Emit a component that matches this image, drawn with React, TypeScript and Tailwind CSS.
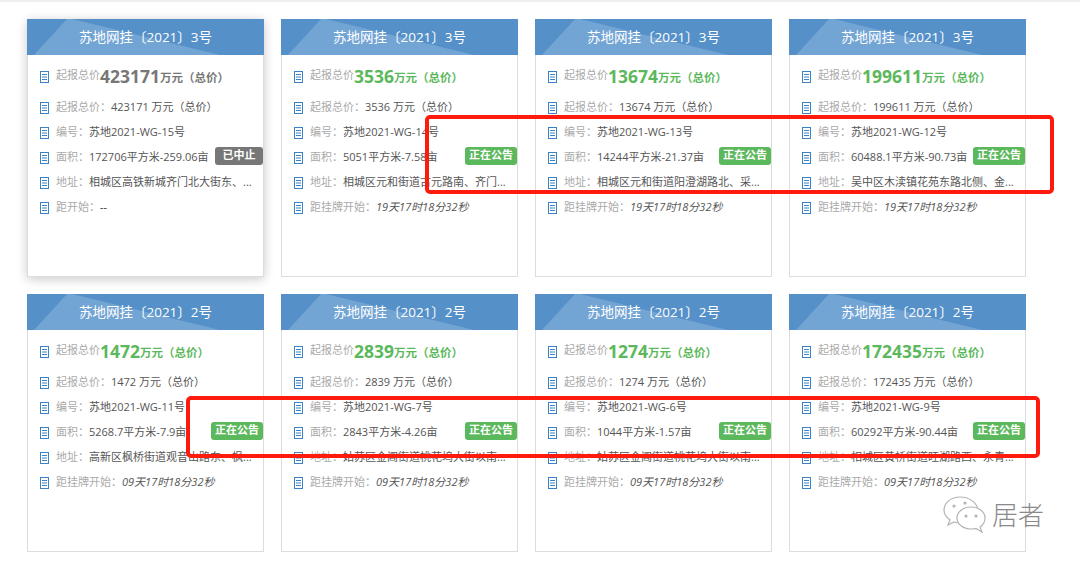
import type { ReactNode } from "react";

type Lot = {
  title: string;
  price: string;
  no: string;
  area: string;
  addr: string;
  timeLabel: string;
  time: string;
  badge: string;
  stopped?: boolean;
};

const lots: Lot[] = [
  { title: "苏地网挂〔2021〕3号", price: "423171", no: "苏地2021-WG-15号", area: "172706平方米-259.06亩", addr: "相城区高铁新城齐门北大街东、...", timeLabel: "距开始：", time: "--", badge: "已中止", stopped: true },
  { title: "苏地网挂〔2021〕3号", price: "3536", no: "苏地2021-WG-14号", area: "5051平方米-7.58亩", addr: "相城区元和街道古元路南、齐门...", timeLabel: "距挂牌开始：", time: "19天17时18分32秒", badge: "正在公告" },
  { title: "苏地网挂〔2021〕3号", price: "13674", no: "苏地2021-WG-13号", area: "14244平方米-21.37亩", addr: "相城区元和街道阳澄湖路北、采...", timeLabel: "距挂牌开始：", time: "19天17时18分32秒", badge: "正在公告" },
  { title: "苏地网挂〔2021〕3号", price: "199611", no: "苏地2021-WG-12号", area: "60488.1平方米-90.73亩", addr: "吴中区木渎镇花苑东路北侧、金...", timeLabel: "距挂牌开始：", time: "19天17时18分32秒", badge: "正在公告" },
  { title: "苏地网挂〔2021〕2号", price: "1472", no: "苏地2021-WG-11号", area: "5268.7平方米-7.9亩", addr: "高新区枫桥街道观音山路东、枫...", timeLabel: "距挂牌开始：", time: "09天17时18分32秒", badge: "正在公告" },
  { title: "苏地网挂〔2021〕2号", price: "2839", no: "苏地2021-WG-7号", area: "2843平方米-4.26亩", addr: "姑苏区金阊街道桃花坞大街以南...", timeLabel: "距挂牌开始：", time: "09天17时18分32秒", badge: "正在公告" },
  { title: "苏地网挂〔2021〕2号", price: "1274", no: "苏地2021-WG-6号", area: "1044平方米-1.57亩", addr: "姑苏区金阊街道桃花坞大街以南...", timeLabel: "距挂牌开始：", time: "09天17时18分32秒", badge: "正在公告" },
  { title: "苏地网挂〔2021〕2号", price: "172435", no: "苏地2021-WG-9号", area: "60292平方米-90.44亩", addr: "相城区黄桥街道旺湖路西、永青...", timeLabel: "距挂牌开始：", time: "09天17时18分32秒", badge: "正在公告" },
];

function DocIcon() {
  return (
    <svg width="9" height="12" viewBox="0 0 9 12" className="shrink-0 mt-px" fill="none" stroke="#3b82c4" strokeWidth="1">
      <rect x="0.5" y="0.5" width="8" height="11" />
      <path d="M2 3.5h5M2 6h5M2 8.5h5" />
    </svg>
  );
}

function Row({ label, children, badge }: { label: string; children: ReactNode; badge?: ReactNode }) {
  return (
    <div className="flex items-center h-[25px] text-[11px] text-[#555]">
      <DocIcon />
      <span className="ml-[7px] text-[#aaa] whitespace-nowrap">{label}</span>
      {children}
      {badge}
    </div>
  );
}

function Card({ lot }: { lot: Lot }) {
  const priceColor = lot.stopped ? "text-[#777]" : "text-[#5cb85c]";
  return (
    <div className={`h-full bg-white border border-[#ddd] ${lot.stopped ? "shadow-[0_2px_10px_rgba(0,0,0,0.22)]" : ""}`}>
      <div className="relative -mx-px -mt-px h-[36px] bg-[#5591c8] overflow-hidden flex items-center justify-center">
        <svg width="237" height="36" viewBox="0 0 237 36" className="absolute left-0 top-0">
          <polygon points="7,36 40,0 45,0 193,36" fill="#72a4d4" />
        </svg>
        <span className="relative text-[13.5px] text-white">{lot.title}</span>
      </div>
      <div className="pl-[12px] pt-[9px]">
        <div className="flex items-center h-[25px] text-[#aaa] text-[11px] whitespace-nowrap">
          <DocIcon />
          <span className="ml-[7px] -mt-[3px]">起报总价</span>
          <span className={`text-[17.5px] font-bold leading-none ${priceColor}`}>{lot.price}</span>
          <span className={`text-[11.5px] font-bold mt-[3px] ${priceColor}`}>万元（总价）</span>
        </div>
        <div className="mt-[6px]">
          <Row label="起报总价：">
            <span className="whitespace-nowrap">{lot.price} 万元（总价）</span>
          </Row>
          <Row label="编号：">
            <span className="whitespace-nowrap">{lot.no}</span>
          </Row>
          <Row
            label="面积："
            badge={
              <span className={`ml-auto mb-[4px] shrink-0 h-[18px] rounded-[3px] text-white text-[11px] font-bold flex items-center justify-center ${lot.stopped ? "w-[48px] bg-[#777]" : "w-[52px] bg-[#5cb85c]"}`}>
                {lot.badge}
              </span>
            }
          >
            <span className="whitespace-nowrap">{lot.area}</span>
          </Row>
          <Row label="地址：">
            <span className="whitespace-nowrap">{lot.addr}</span>
          </Row>
          <Row label={lot.timeLabel}>
            <span className="whitespace-nowrap italic">{lot.time}</span>
          </Row>
        </div>
      </div>
    </div>
  );
}

function WechatMark() {
  return (
    <svg width="44" height="40" viewBox="0 0 44 40" fill="#fff" stroke="#b4b4b4" strokeWidth="1.2">
      <path d="M17 2C8 2 1 8 1 15c0 4 2 7 6 10l-2 5 6-3c2 .6 4 1 6 1 2 0 3 0 4-.5C20 21 25 14 35 14 33 7 26 2 17 2Z" />
      <path d="M28 12c-8 0-14 5-14 11s6 11 14 11c2 0 3 0 5-.6l6 3.6-2-5c3-2 5-5 5-9 0-6-6-11-14-11Z" />
      <circle cx="11" cy="11" r="1.6" fill="#b4b4b4" stroke="none" />
      <circle cx="22" cy="8" r="1.6" fill="#b4b4b4" stroke="none" />
      <circle cx="23" cy="21" r="1.6" fill="#b4b4b4" stroke="none" />
      <circle cx="33" cy="21" r="1.6" fill="#b4b4b4" stroke="none" />
    </svg>
  );
}

export default function App() {
  return (
    <div
      className="relative w-[1080px] h-[564px] bg-white overflow-hidden"
      style={{ fontFamily: '"Open Sans", "Noto Sans CJK SC", sans-serif' }}
    >
      <div className="h-[2px] bg-[#efefef]" />
      <div className="pt-[17px] pl-[27px] grid grid-cols-[237px_237px_237px_237px] grid-rows-[258px_258px] gap-x-[17px] gap-y-[17px]">
        {lots.map((lot) => (
          <Card key={lot.no} lot={lot} />
        ))}
      </div>

      {/* red marks drawn over the screenshot */}
      <div className="absolute left-[425px] top-[115px] w-[629px] h-[79px] border-[4px] border-[#ff1a0e] rounded-[5px] pointer-events-none" />
      <div className="absolute left-[186px] top-[396px] w-[854px] h-[62px] border-[4px] border-[#ff1a0e] rounded-[5px] pointer-events-none" />

      {/* watermark */}
      <div className="absolute left-[943px] top-[495px] flex items-center gap-[5px]">
        <WechatMark />
        <span className="text-[26px] font-light text-[#8a8a8a] leading-none">居者</span>
      </div>
    </div>
  );
}
